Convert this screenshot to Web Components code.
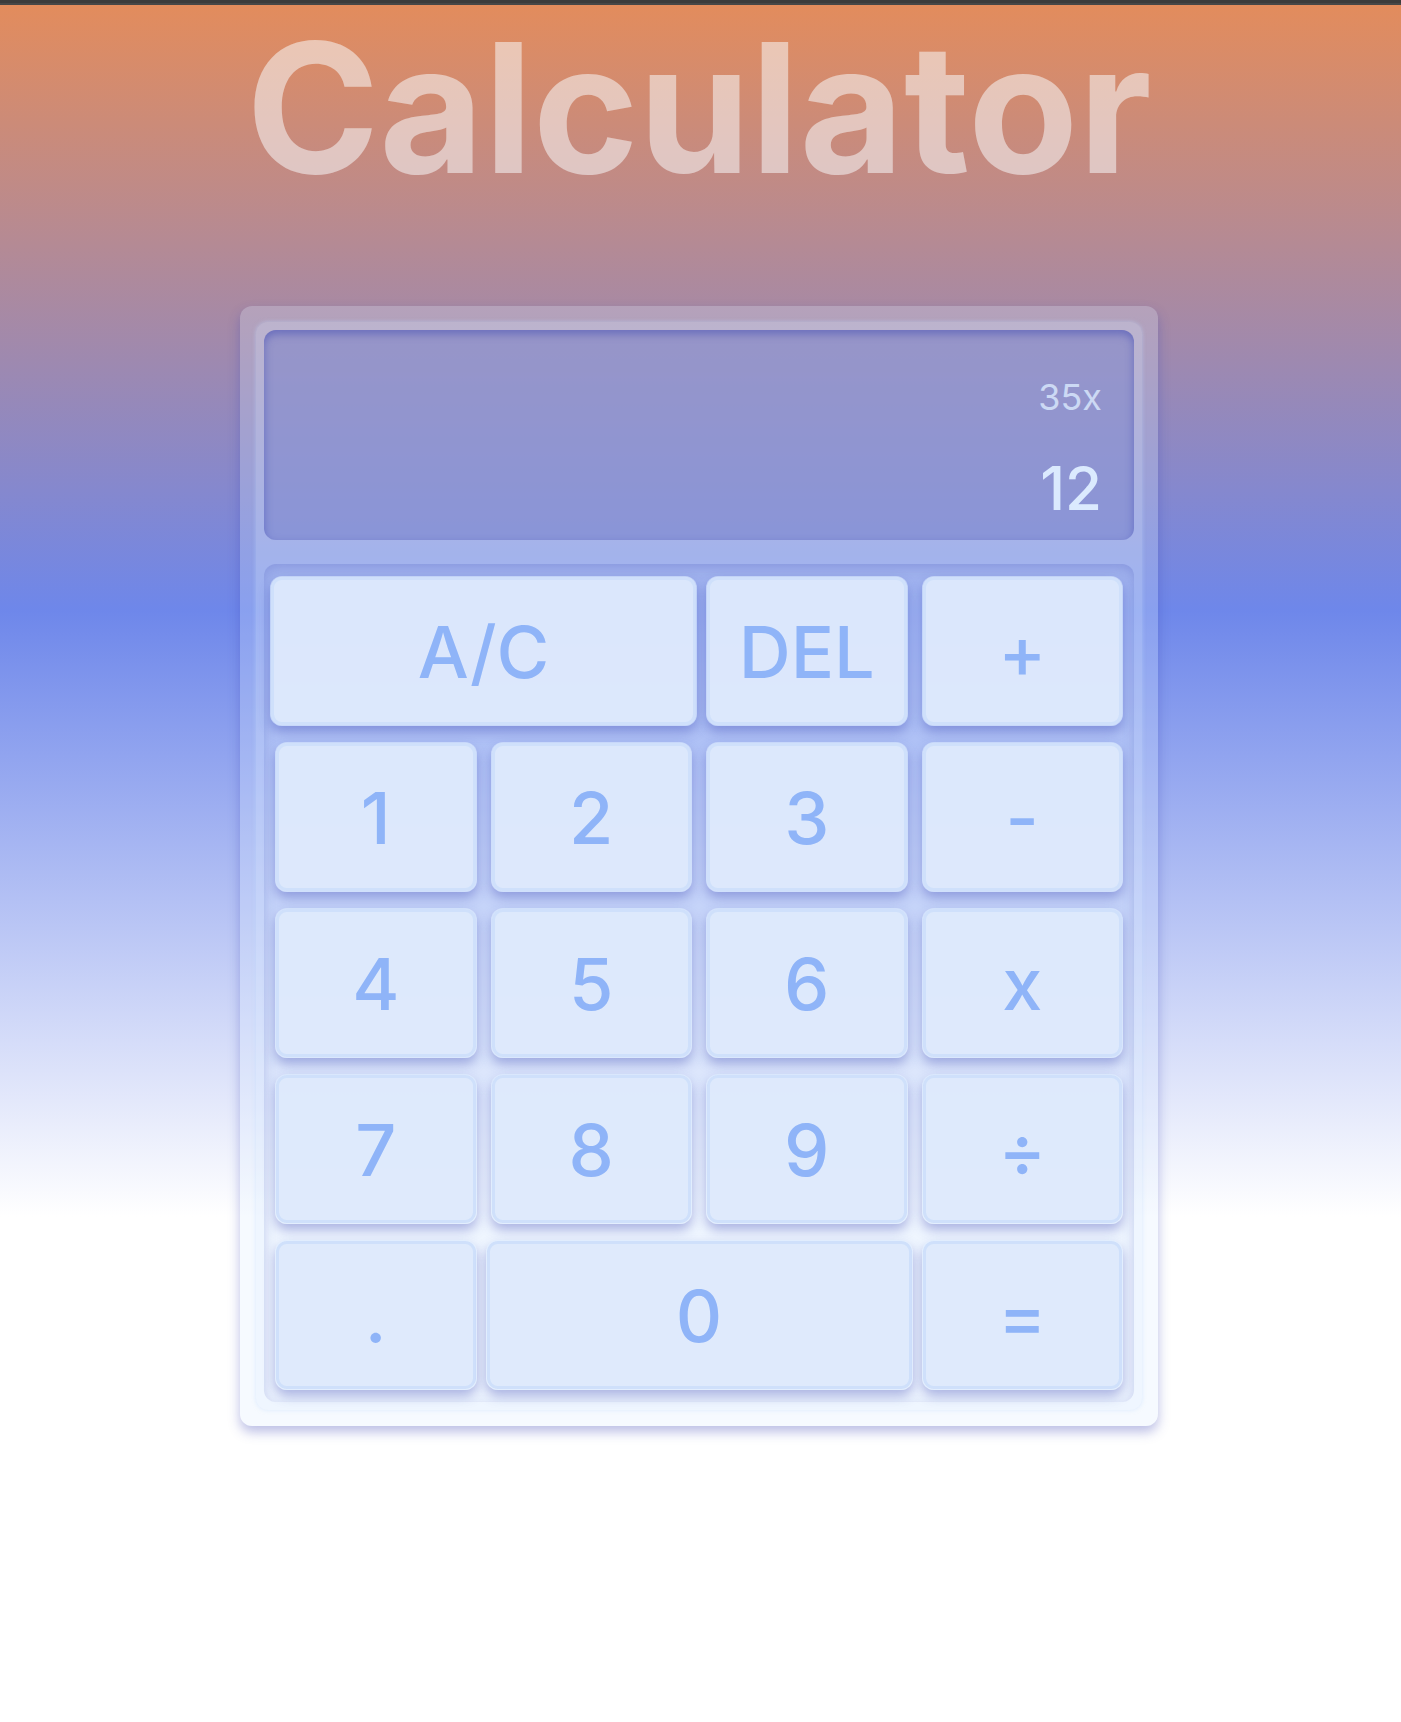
<!DOCTYPE html>
<html lang="en">
<head>
<meta charset="utf-8">
<title>Calculator</title>
<style>
  html, body { margin: 0; }
  body { font-family: Inter, "Liberation Sans", sans-serif; background: #fff; }
</style>
</head>
<body>
<calc-app>
  <calc-title>Calculator</calc-title>
  <calc-panel>
    <calc-screen previous="35x" current="12"></calc-screen>
    <calc-keypad>
      <calc-key wide>A/C</calc-key>
      <calc-key>DEL</calc-key>
      <calc-key>+</calc-key>
      <calc-key>1</calc-key>
      <calc-key>2</calc-key>
      <calc-key>3</calc-key>
      <calc-key>-</calc-key>
      <calc-key>4</calc-key>
      <calc-key>5</calc-key>
      <calc-key>6</calc-key>
      <calc-key>x</calc-key>
      <calc-key>7</calc-key>
      <calc-key>8</calc-key>
      <calc-key>9</calc-key>
      <calc-key>÷</calc-key>
      <calc-key>.</calc-key>
      <calc-key wide>0</calc-key>
      <calc-key>=</calc-key>
    </calc-keypad>
  </calc-panel>
</calc-app>
<script>
  const define = (name, markup, setup) => {
    const template = document.createElement('template');
    template.innerHTML = markup;
    customElements.define(name, class extends HTMLElement {
      constructor() {
        super();
        this.attachShadow({ mode: 'open' }).append(template.content.cloneNode(true));
      }
      connectedCallback() {
        if (setup) setup(this, this.shadowRoot);
      }
    });
  };

  define('calc-app', `
    <style>
      :host {
        display: block;
        box-sizing: border-box;
        min-height: 100vh;
        border-top: 3px solid #3c3c3c;
        box-shadow: inset 0 2px #474747;
        background: linear-gradient(#e38c5c, #6e87ea 35.3%, #fff 70.6%);
      }
      main {
        display: flex;
        flex-direction: column;
        align-items: center;
        gap: 96px;
        padding: 2px 3px 48px 0;
      }
    </style>
    <main><slot></slot></main>`);

  define('calc-title', `
    <style>
      :host { display: block; }
      h1 {
        margin: 0;
        font-size: 180px;
        line-height: 205px;
        font-weight: 700;
        color: rgba(250, 253, 255, .52);
      }
    </style>
    <h1><slot></slot></h1>`);

  define('calc-panel', `
    <style>
      :host {
        display: block;
        box-sizing: border-box;
        width: min(100% - 32px, 918px);
        padding: 16px;
        border-radius: 12px;
        background: rgba(219, 234, 254, .25);
        box-shadow: 0 6px 12px rgba(60, 70, 180, .35);
      }
      section {
        display: flex;
        flex-direction: column;
        gap: 24px;
        padding: 8px;
        border-radius: 12px;
        background: rgba(219, 234, 254, .25);
        box-shadow: 0 0 4px rgba(191, 219, 254, .5);
      }
    </style>
    <section><slot></slot></section>`);

  define('calc-screen', `
    <style>
      :host {
        display: flex;
        flex-direction: column;
        align-items: flex-end;
        gap: 32px;
        box-sizing: border-box;
        min-height: 210px;
        padding: 45px 32px 15px;
        border-radius: 12px;
        background: rgba(98, 105, 190, .4);
        box-shadow: inset 0 4px 8px rgba(60, 70, 180, .5);
        color: #dbeafe;
      }
      output { display: block; }
      .previous { font-size: 36px; line-height: 44px; opacity: .8; }
      .current { font-size: 60px; line-height: 74px; font-weight: 500; }
    </style>
    <output class="previous"></output>
    <output class="current"></output>`,
    (host, root) => {
      root.querySelector('.previous').textContent = host.getAttribute('previous');
      root.querySelector('.current').textContent = host.getAttribute('current');
    });

  define('calc-keypad', `
    <style>
      :host {
        display: grid;
        grid-template-columns: repeat(4, minmax(0, 1fr));
        row-gap: 16px;
        padding: 12px 4px;
        border-radius: 12px;
        box-shadow: inset 0 4px 12px rgba(60, 70, 180, .25);
      }
    </style>
    <slot></slot>`);

  define('calc-key', `
    <style>
      :host { display: block; margin: 0 7px; }
      :host([wide]) { grid-column: span 2; margin: 0 2px; }
      button {
        display: block;
        box-sizing: border-box;
        width: 100%;
        height: 150px;
        margin: 0;
        padding: 2px 0 0;
        border: 1px solid rgba(219, 234, 254, .6);
        border-radius: 12px;
        background: rgba(222, 233, 252, .96);
        background-clip: padding-box;
        box-shadow: inset 0 0 0 3px #cfe0fb, 0 6px 12px rgba(60, 70, 180, .38);
        font: inherit;
        font-size: 72px;
        font-weight: 500;
        line-height: 90px;
        color: #8fb4f8;
        cursor: pointer;
      }
    </style>
    <button type="button"><slot></slot></button>`);
</script>
</body>
</html>
